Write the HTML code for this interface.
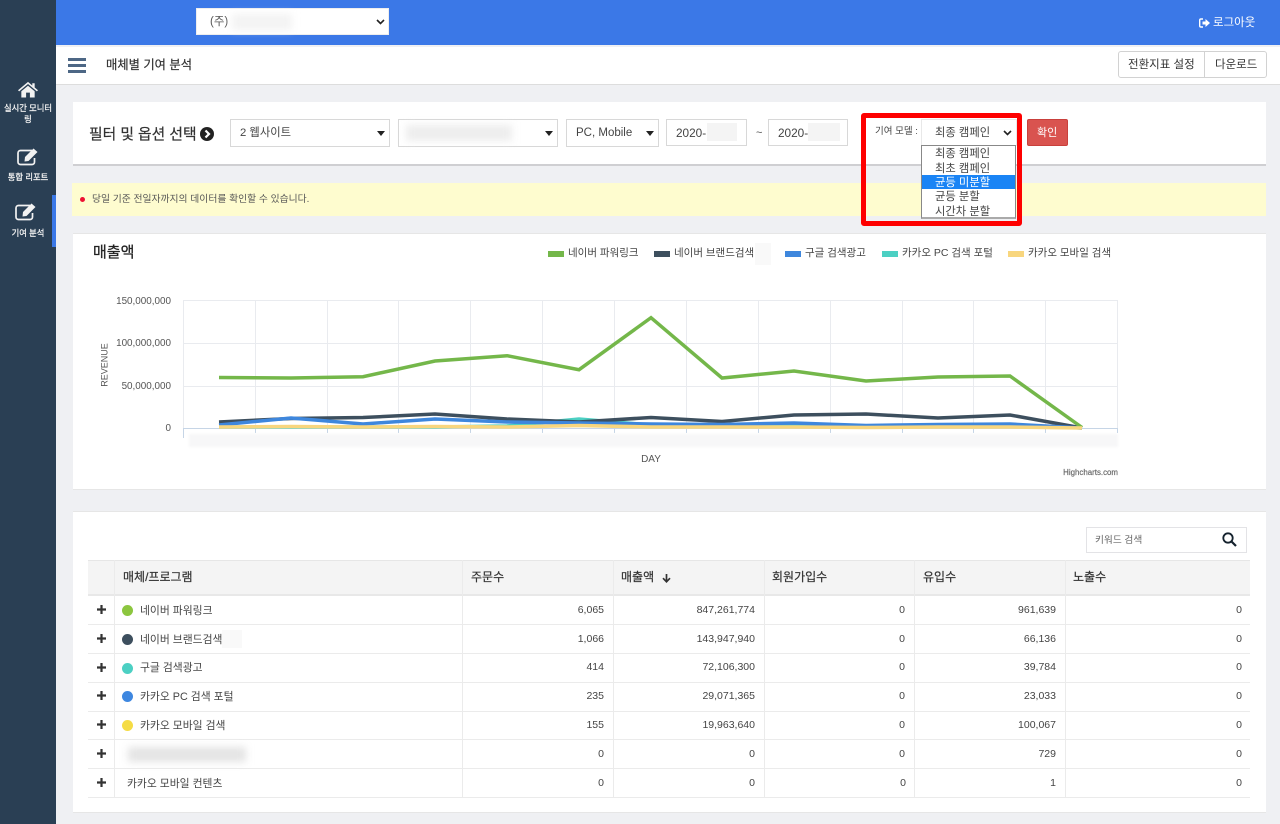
<!DOCTYPE html>
<html lang="ko"><head><meta charset="utf-8"><title>매체별 기여 분석</title>
<style>
*{box-sizing:border-box}
html,body{margin:0;padding:0}
body{width:1280px;height:824px;overflow:hidden;position:relative;background:#eff0f3;font-family:"Liberation Sans","Noto Sans CJK KR",sans-serif;font-size:11px;color:#444}
.a{position:absolute}
.t{position:absolute;white-space:nowrap;line-height:14px}
.blur{position:absolute;background:#e9e9e9;filter:blur(4px)}
.box{position:absolute;background:#fff;border:1px solid #d8d8d8}
.card{position:absolute;background:#fff;left:73px;width:1193px}
.caret{position:absolute;width:0;height:0;border-left:4px solid transparent;border-right:4px solid transparent;border-top:5px solid #222}
.hl{position:absolute;background:#ebebeb;height:1px;left:88px;width:1162px}
.vl{position:absolute;background:#ebebeb;width:1px}
.th{position:absolute;top:570px;font-size:12px;color:#333;line-height:14px;white-space:nowrap;-webkit-text-stroke:.2px #333}
.num{position:absolute;text-align:right;font-size:10.5px;color:#444;line-height:14px;width:120px}
.plus{position:absolute;left:96px;width:11px;height:11px}
.dot{position:absolute;left:122px;width:11px;height:11px;border-radius:50%}
.name{position:absolute;left:140px;font-size:10.8px;color:#444;line-height:14px;white-space:nowrap}
.leg{position:absolute;top:246px;font-size:10.5px;color:#444;line-height:14px;white-space:nowrap}
.sw{position:absolute;top:251px;width:16px;height:6px}
.side{position:absolute;left:0;width:56px;text-align:center;color:#f2f2f2;font-size:8.3px;line-height:11px;-webkit-text-stroke:.25px #f2f2f2}
</style></head><body>

<!-- sidebar -->
<div class="a" style="left:0;top:0;width:56px;height:824px;background:#2a3f54"></div>
<div class="a" style="left:52px;top:195px;width:4px;height:52px;background:#3b78e7"></div>
<svg class="a" style="left:18px;top:81px" width="20" height="17" viewBox="0 0 21 19" preserveAspectRatio="none"><path d="M10.5 1 L15 5 V2.5 H17.5 V7.2 L21 10.3 L19.8 11.6 L10.5 3.4 L1.2 11.6 L0 10.3 Z M3.5 11.5 L10.5 5.3 L17.5 11.5 V18.5 H12.5 V13 H8.5 V18.5 H3.5 Z" fill="#f2f2f2"/></svg>
<div class="side" style="top:103px">실시간 모니터<br>링</div>
<svg class="a" style="left:17px;top:147px" width="23" height="20" viewBox="0 0 23 20"><path d="M15 3.500 H3.500 A2.500 2.500 0 0 0 1 6 V15 A2.500 2.500 0 0 0 3.500 17.500 H15 A2.500 2.500 0 0 0 17.500 15 V11" fill="none" stroke="#f2f2f2" stroke-width="1.700"/><path d="M8 10 L16.500 1.500 L20.500 5 L11.500 14 L7.500 14.500 Z" fill="#f2f2f2"/></svg>
<div class="side" style="top:172px">통합 리포트</div>
<svg class="a" style="left:15px;top:202px" width="23" height="20" viewBox="0 0 23 20"><path d="M15 3.500 H3.500 A2.500 2.500 0 0 0 1 6 V15 A2.500 2.500 0 0 0 3.500 17.500 H15 A2.500 2.500 0 0 0 17.500 15 V11" fill="none" stroke="#f2f2f2" stroke-width="1.700"/><path d="M8 10 L16.500 1.500 L20.500 5 L11.500 14 L7.500 14.500 Z" fill="#f2f2f2"/></svg>
<div class="side" style="top:228px">기여 분석</div>

<!-- top bar -->
<div class="a" style="left:56px;top:0;width:1224px;height:45px;background:#3b78e7"></div>
<div class="a" style="left:196px;top:8px;width:193px;height:27px;background:#fff;border:1px solid #eee"></div>
<div class="t" style="left:210px;top:15px;font-size:11.5px;color:#555">(주)</div>
<div class="blur" style="left:232px;top:14px;width:60px;height:16px;background:#f3f3f3"></div>
<svg class="a" style="left:376px;top:19px" width="9" height="6" viewBox="0 0 9 6"><path d="M1 1 L4.5 4.5 L8 1" fill="none" stroke="#222" stroke-width="1.6"/></svg>
<svg class="a" style="left:1199px;top:18px" width="11" height="10" viewBox="0 0 11 10"><path d="M4 1 H2 A1.3 1.3 0 0 0 .7 2.3 V7.7 A1.3 1.3 0 0 0 2 9 H4" fill="none" stroke="#fff" stroke-width="1.4"/><path d="M3.5 3.5 H6.5 V1 L11 5 L6.5 9 V6.5 H3.5 Z" fill="#fff"/></svg>
<div class="t" style="left:1213px;top:16px;font-size:11.5px;color:#fff">로그아웃</div>

<!-- sub bar -->
<div class="a" style="left:56px;top:47px;width:1224px;height:38px;background:#fff;border-bottom:1px solid #ddd"></div>
<div class="a" style="left:68px;top:58px;width:18px;height:3px;background:#4d6785"></div>
<div class="a" style="left:68px;top:64px;width:18px;height:3px;background:#4d6785"></div>
<div class="a" style="left:68px;top:70px;width:18px;height:3px;background:#4d6785"></div>
<div class="t" style="left:106px;top:58px;font-size:12.300px;color:#333;-webkit-text-stroke:.2px #333">매체별 기여 분석</div>
<div class="a" style="left:1118px;top:51px;width:149px;height:27px;background:#fff;border:1px solid #d2d2d2;border-radius:3px"></div>
<div class="a" style="left:1204px;top:51px;width:1px;height:27px;background:#d2d2d2"></div>
<div class="t" style="left:1128px;top:58px;font-size:11.5px;color:#333">전환지표 설정</div>
<div class="t" style="left:1215px;top:58px;font-size:11.5px;color:#333">다운로드</div>

<!-- filter card -->
<div class="card" style="top:102px;height:64px;border-bottom:2px solid #cfcfd2"></div>
<div class="t" style="left:89px;top:126px;font-size:14.800px;line-height:18px;color:#333;-webkit-text-stroke:.2px #333">필터 및 옵션 선택</div>
<svg class="a" style="left:200px;top:127px" width="14" height="14" viewBox="0 0 14 14"><circle cx="7" cy="7" r="7" fill="#222"/><path d="M5.5 3.5 L9 7 L5.5 10.5" fill="none" stroke="#fff" stroke-width="2.2"/></svg>
<div class="box" style="left:230px;top:119px;width:160px;height:28px"></div>
<div class="t" style="left:240px;top:126px;font-size:11.300px;color:#444">2 웹사이트</div>
<div class="caret" style="left:377px;top:131px"></div>
<div class="box" style="left:398px;top:119px;width:160px;height:28px"></div>
<div class="blur" style="left:406px;top:125px;width:106px;height:16px;background:#ededed"></div>
<div class="caret" style="left:545px;top:131px"></div>
<div class="box" style="left:566px;top:119px;width:93px;height:28px"></div>
<div class="t" style="left:576px;top:126px;font-size:11.5px;color:#444">PC, Mobile</div>
<div class="caret" style="left:646px;top:131px"></div>
<div class="box" style="left:666px;top:119px;width:81px;height:27px"></div>
<div class="t" style="left:676px;top:126px;font-size:11.800px;color:#444">2020-</div>
<div class="a" style="left:707px;top:123px;width:30px;height:18px;background:#f4f4f4"></div>
<div class="t" style="left:756px;top:126px;font-size:11px;color:#555">~</div>
<div class="box" style="left:768px;top:119px;width:80px;height:27px"></div>
<div class="t" style="left:778px;top:126px;font-size:11.800px;color:#444">2020-</div>
<div class="a" style="left:808px;top:123px;width:32px;height:18px;background:#f4f4f4"></div>

<!-- notice -->
<div class="a" style="left:72px;top:183px;width:1194px;height:33px;background:#fefccf"></div>
<div class="a" style="left:80px;top:197px;width:5px;height:5px;border-radius:50%;background:#ee1133"></div>
<div class="t" style="left:92px;top:193px;font-size:9.800px;color:#555">당일 기준 전일자까지의 데이터를 확인할 수 있습니다.</div>

<!-- red highlight + attribution select -->
<div class="a" style="left:861px;top:113px;width:161px;height:113px;border:5px solid #fe0000;border-radius:3px"></div>
<div class="t" style="left:875px;top:125px;font-size:9.5px;color:#444">기여 모델 :</div>
<div class="a" style="left:921px;top:119px;width:96px;height:27px;background:#fff;border:1px solid #e8e8e8"></div>
<div class="t" style="left:935px;top:126px;font-size:11.300px;color:#444">최종 캠페인</div>
<svg class="a" style="left:1003px;top:130px" width="9" height="6" viewBox="0 0 9 6"><path d="M1 1 L4.5 4.5 L8 1" fill="none" stroke="#222" stroke-width="1.6"/></svg>
<div class="a" style="left:921px;top:145px;width:95px;height:74px;background:#fff;border:1px solid #888;border-bottom:2px solid #aaa"></div>
<div class="a" style="left:922px;top:175px;width:93px;height:14px;background:#1a84f5"></div>
<div class="t" style="left:935px;top:147px;font-size:11.300px;color:#444">최종 캠페인</div>
<div class="t" style="left:935px;top:162px;font-size:11.300px;color:#444">최초 캠페인</div>
<div class="t" style="left:935px;top:176px;font-size:11.300px;color:#fff">균등 미분할</div>
<div class="t" style="left:935px;top:190px;font-size:11.300px;color:#444">균등 분할</div>
<div class="t" style="left:935px;top:205px;font-size:11.300px;color:#444">시간차 분할</div>
<div class="a" style="left:1027px;top:119px;width:41px;height:27px;background:#d9534f;border:1px solid #c9403c;border-radius:2px"></div>
<div class="t" style="left:1037px;top:126px;font-size:11px;color:#fff">확인</div>

<!-- chart card -->
<div class="card" style="top:233px;height:257px;border-top:1px solid #e6e6e6;border-bottom:1px solid #e6e6e6"></div>
<div class="t" style="left:93px;top:244px;font-size:15px;line-height:18px;color:#222;-webkit-text-stroke:.3px #222">매출액</div>

<div class="sw" style="left:548px;background:#74b74a"></div><div class="leg" style="left:568px">네이버 파워링크</div>
<div class="sw" style="left:654px;background:#3d4f5e"></div><div class="leg" style="left:674px">네이버 브랜드검색</div>
<div class="a" style="left:755px;top:243px;width:16px;height:22px;background:#f9f9f9"></div>
<div class="sw" style="left:785px;background:#3e87dd"></div><div class="leg" style="left:805px">구글 검색광고</div>
<div class="sw" style="left:882px;background:#4cd0c3"></div><div class="leg" style="left:902px">카카오 PC 검색 포털</div>
<div class="sw" style="left:1008px;background:#f8d67e"></div><div class="leg" style="left:1028px">카카오 모바일 검색</div>

<svg class="a" style="left:0;top:0" width="1280" height="490" viewBox="0 0 1280 490">
<g stroke="#e9ebef" stroke-width="1" fill="none">
<path d="M183 300.5H1118M183 343.5H1118M183 386.5H1118"/>
<path d="M183.500 300V429M255.500 300V429M327.500 300V429M398.500 300V429M470.500 300V429M542.500 300V429M614.500 300V429M686.500 300V429M758.500 300V429M830.500 300V429M902.500 300V429M973.500 300V429M1045.500 300V429M1117.500 300V429"/>
</g>
<path d="M183 428.500H1118" stroke="#c6d5e6" stroke-width="1"/>
<path d="M183.500 429V438M255.500 429V433M327.500 429V433M398.500 429V433M470.500 429V433M542.500 429V433M614.500 429V433M686.500 429V433M758.500 429V433M830.500 429V433M902.500 429V433M973.500 429V433M1045.500 429V433M1117.500 429V433" stroke="#c6d5e6" stroke-width="1"/>
<g fill="none" stroke-width="3.500" stroke-linejoin="miter">
<polyline stroke="#4cd0c3" points="219,427 291,427 363,427 435,427 507,426 579,419 651,425 722,426 794,426 866,427 938,426 1010,425 1082,428"/>
<polyline stroke="#3d4f5e" points="219,422 291,418.500 363,417.500 435,414 507,419 579,422 651,417.500 722,421.500 794,415 866,414 938,418 1010,415 1082,428"/>
<polyline stroke="#3e87dd" points="219,425 291,418 363,424 435,419 507,422 579,423 651,424 722,424.500 794,423 866,425.500 938,424.500 1010,424 1082,428"/>
<polyline stroke="#74b74a" points="219,377.500 291,378 363,376.700 435,361 507,355.700 579,369.700 651,317.700 722,378 794,371 866,381 938,377 1010,376 1082,427.500"/>
<polyline stroke="#f8d67e" points="219,427 291,426.500 363,427 435,426.500 507,427 579,425.500 651,427 722,427 794,427 866,427.500 938,427 1010,427 1082,428"/>
</g>
<g font-family="Liberation Sans,sans-serif" font-size="9.900" fill="#555" text-anchor="end">
<text x="171" y="304">150,000,000</text>
<text x="171" y="346">100,000,000</text>
<text x="171" y="389">50,000,000</text>
<text x="171" y="431">0</text>
</g>
<text x="107.500" y="365" transform="rotate(-90 107.500 365)" text-anchor="middle" font-family="Liberation Sans,sans-serif" font-size="9" fill="#555">REVENUE</text>
<text x="651" y="462" text-anchor="middle" font-family="Liberation Sans,sans-serif" font-size="10" fill="#555">DAY</text>
<text x="1118" y="475" text-anchor="end" font-family="Liberation Sans,sans-serif" font-size="7.900" fill="#666" stroke="#666" stroke-width=".15">Highcharts.com</text>
</svg>
<div class="a" style="left:189px;top:434px;width:929px;height:13px;background:#f7f7f8;filter:blur(1px)"></div>

<!-- table card -->
<div class="card" style="top:511px;height:302px;border-top:1px solid #e6e6e6;border-bottom:1px solid #e6e6e6"></div>
<div class="box" style="left:1086px;top:527px;width:161px;height:26px;border-color:#e3e3e6"></div>
<div class="t" style="left:1095px;top:534px;font-size:9.700px;color:#666">키워드 검색</div>
<svg class="a" style="left:1222px;top:532px" width="15" height="15" viewBox="0 0 15 15"><circle cx="6" cy="6" r="4.7" fill="none" stroke="#15222e" stroke-width="1.8"/><path d="M9.500 9.500 L14 14" stroke="#15222e" stroke-width="2.2"/></svg>

<div class="a" style="left:88px;top:560px;width:1162px;height:36px;background:#f4f4f4;border-top:1px solid #e6e6e6;border-bottom:2px solid #e8e8e8"></div>
<div class="vl" style="left:114px;top:560px;height:237px"></div>
<div class="vl" style="left:462px;top:560px;height:237px"></div>
<div class="vl" style="left:613px;top:560px;height:237px"></div>
<div class="vl" style="left:764px;top:560px;height:237px"></div>
<div class="vl" style="left:914px;top:560px;height:237px"></div>
<div class="vl" style="left:1065px;top:560px;height:237px"></div>
<div class="hl" style="top:624px"></div><div class="hl" style="top:653px"></div><div class="hl" style="top:682px"></div><div class="hl" style="top:711px"></div><div class="hl" style="top:739px"></div><div class="hl" style="top:768px"></div><div class="hl" style="top:797px"></div>

<div class="th" style="left:123px">매체/프로그램</div>
<div class="th" style="left:471px">주문수</div>
<div class="th" style="left:621px">매출액</div>
<svg class="a" style="left:662px;top:573px" width="9" height="10" viewBox="0 0 9 10"><path d="M4.500 1V8.500M1 5.200L4.500 8.800L8 5.200" fill="none" stroke="#333" stroke-width="1.7"/></svg>
<div class="th" style="left:772px">회원가입수</div>
<div class="th" style="left:923px">유입수</div>
<div class="th" style="left:1073px">노출수</div>

<svg class="plus" style="top:604px" viewBox="0 0 11 11"><path d="M5.500 1V10M1 5.500H10" stroke="#333" stroke-width="2.200"/></svg>
<svg class="plus" style="top:633px" viewBox="0 0 11 11"><path d="M5.500 1V10M1 5.500H10" stroke="#333" stroke-width="2.200"/></svg>
<svg class="plus" style="top:662px" viewBox="0 0 11 11"><path d="M5.500 1V10M1 5.500H10" stroke="#333" stroke-width="2.200"/></svg>
<svg class="plus" style="top:690px" viewBox="0 0 11 11"><path d="M5.500 1V10M1 5.500H10" stroke="#333" stroke-width="2.200"/></svg>
<svg class="plus" style="top:719px" viewBox="0 0 11 11"><path d="M5.500 1V10M1 5.500H10" stroke="#333" stroke-width="2.200"/></svg>
<svg class="plus" style="top:748px" viewBox="0 0 11 11"><path d="M5.500 1V10M1 5.500H10" stroke="#333" stroke-width="2.200"/></svg>
<svg class="plus" style="top:777px" viewBox="0 0 11 11"><path d="M5.500 1V10M1 5.500H10" stroke="#333" stroke-width="2.200"/></svg>

<div class="dot" style="top:605px;background:#8cc63f"></div><div class="name" style="top:604px">네이버 파워링크</div>
<div class="dot" style="top:634px;background:#3d4f5e"></div><div class="name" style="top:633px">네이버 브랜드검색</div>
<div class="a" style="left:222px;top:630px;width:20px;height:18px;background:#f9f9f9"></div>
<div class="dot" style="top:663px;background:#4cd0c3"></div><div class="name" style="top:661px">구글 검색광고</div>
<div class="dot" style="top:691px;background:#3e87e0"></div><div class="name" style="top:690px">카카오 PC 검색 포털</div>
<div class="dot" style="top:720px;background:#f5dc45"></div><div class="name" style="top:719px">카카오 모바일 검색</div>
<div class="blur" style="left:128px;top:747px;width:118px;height:15px;background:#e4e4e4"></div>
<div class="name" style="left:127px;top:777px">카카오 모바일 컨텐츠</div>

<div class="num" style="left:484px;top:603px">6,065</div><div class="num" style="left:635px;top:603px">847,261,774</div><div class="num" style="left:785px;top:603px">0</div><div class="num" style="left:936px;top:603px">961,639</div><div class="num" style="left:1122px;top:603px">0</div>
<div class="num" style="left:484px;top:632px">1,066</div><div class="num" style="left:635px;top:632px">143,947,940</div><div class="num" style="left:785px;top:632px">0</div><div class="num" style="left:936px;top:632px">66,136</div><div class="num" style="left:1122px;top:632px">0</div>
<div class="num" style="left:484px;top:660px">414</div><div class="num" style="left:635px;top:660px">72,106,300</div><div class="num" style="left:785px;top:660px">0</div><div class="num" style="left:936px;top:660px">39,784</div><div class="num" style="left:1122px;top:660px">0</div>
<div class="num" style="left:484px;top:689px">235</div><div class="num" style="left:635px;top:689px">29,071,365</div><div class="num" style="left:785px;top:689px">0</div><div class="num" style="left:936px;top:689px">23,033</div><div class="num" style="left:1122px;top:689px">0</div>
<div class="num" style="left:484px;top:718px">155</div><div class="num" style="left:635px;top:718px">19,963,640</div><div class="num" style="left:785px;top:718px">0</div><div class="num" style="left:936px;top:718px">100,067</div><div class="num" style="left:1122px;top:718px">0</div>
<div class="num" style="left:484px;top:747px">0</div><div class="num" style="left:635px;top:747px">0</div><div class="num" style="left:785px;top:747px">0</div><div class="num" style="left:936px;top:747px">729</div><div class="num" style="left:1122px;top:747px">0</div>
<div class="num" style="left:484px;top:776px">0</div><div class="num" style="left:635px;top:776px">0</div><div class="num" style="left:786px;top:776px">0</div><div class="num" style="left:936px;top:776px">1</div><div class="num" style="left:1122px;top:776px">0</div>
</body></html>
